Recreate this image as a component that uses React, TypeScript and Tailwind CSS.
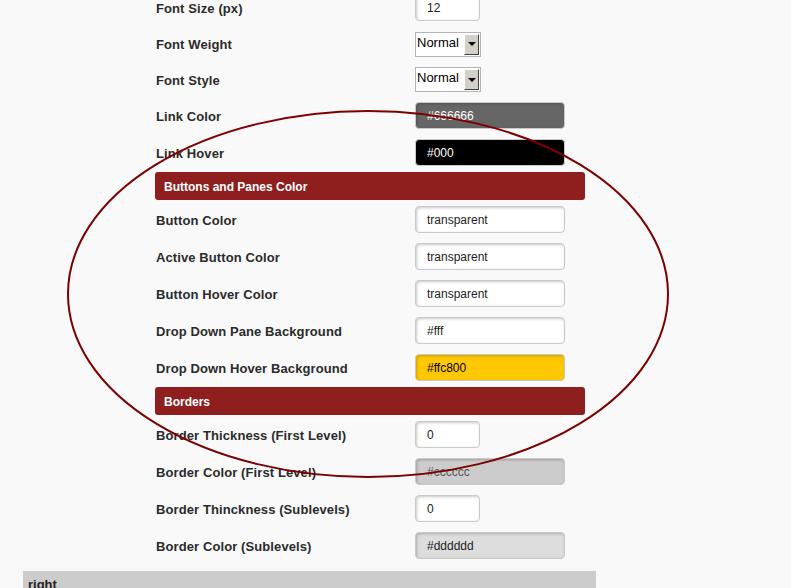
type Field = {
  label: string
  value?: string
  kind: 'text' | 'small' | 'select'
  bg?: string
  h?: string
}

const top: Field[] = [
  { label: 'Font Size (px)', value: '12', kind: 'small', h: 'h-[37px]' },
  { label: 'Font Weight', value: 'Normal', kind: 'select', h: 'h-[36px]' },
  { label: 'Font Style', value: 'Normal', kind: 'select', h: 'h-[35px]' },
  { label: 'Link Color', value: '#666666', kind: 'text', bg: 'bg-[#666666] text-white' },
  { label: 'Link Hover', value: '#000', kind: 'text', bg: 'bg-black text-white' },
]

const panes: Field[] = [
  { label: 'Button Color', value: 'transparent', kind: 'text' },
  { label: 'Active Button Color', value: 'transparent', kind: 'text' },
  { label: 'Button Hover Color', value: 'transparent', kind: 'text' },
  { label: 'Drop Down Pane Background', value: '#fff', kind: 'text' },
  { label: 'Drop Down Hover Background', value: '#ffc800', kind: 'text', bg: 'bg-[#ffc800] text-black' },
]

const borders: Field[] = [
  { label: 'Border Thickness (First Level)', value: '0', kind: 'small' },
  { label: 'Border Color (First Level)', value: '#cccccc', kind: 'text', bg: 'bg-[#cccccc] text-[#555]' },
  { label: 'Border Thinckness (Sublevels)', value: '0', kind: 'small' },
  { label: 'Border Color (Sublevels)', value: '#dddddd', kind: 'text', bg: 'bg-[#dddddd] text-[#222]' },
]

function Control({ field }: { field: Field }) {
  if (field.kind === 'select') {
    return (
      <div className="flex h-[25px] w-[66px] items-stretch border border-[#b5b5b5] bg-white">
        <span className="flex-1 pl-[1px] pt-[1px] text-[13px] leading-[18px] text-black">{field.value}</span>
        <span className="m-[1px] flex w-[15px] items-center justify-center border border-t-white border-l-white border-r-[#404040] border-b-[#404040] bg-[#d4d0c8]">
          <span className="h-0 w-0 border-x-[4px] border-t-[4px] border-x-transparent border-t-black" />
        </span>
      </div>
    )
  }
  const width = field.kind === 'small' ? 'w-[65px]' : 'w-[150px]'
  const color = field.bg ?? 'bg-white text-[#222]'
  return (
    <div
      className={`flex h-[27px] ${width} items-center rounded-[4px] border border-[#c9c9c9] pl-[11px] text-[12px] shadow-[inset_1px_1px_3px_rgba(0,0,0,0.22)] ${color}`}
    >
      {field.value}
    </div>
  )
}

function Row({ field }: { field: Field }) {
  return (
    <div className={`flex items-center ${field.h ?? 'h-[37px]'}`}>
      <div className="w-[260px] pl-[1px] pt-[2px] text-[13px] font-bold tracking-[0.1px] text-[#2b2b2b]">
        {field.label}
      </div>
      <Control field={field} />
    </div>
  )
}

function SectionHeader({ title }: { title: string }) {
  return (
    <div className="my-[1px] flex h-[28px] items-center rounded-[3px] bg-[#8f1f1f] pl-[9px] pt-[1px] text-[12px] font-bold text-white">
      {title}
    </div>
  )
}

export default function App() {
  return (
    <div
      className="relative h-[588px] w-[791px] overflow-hidden bg-[#f9f9f9]"
      style={{ fontFamily: '"Liberation Sans", Arial, sans-serif' }}
    >
      <div className="ml-[155px] mt-[-11px] w-[430px]">
        {top.map((f) => (
          <Row key={f.label} field={f} />
        ))}
        <SectionHeader title="Buttons and Panes Color" />
        {panes.map((f) => (
          <Row key={f.label} field={f} />
        ))}
        <SectionHeader title="Borders" />
        {borders.map((f) => (
          <Row key={f.label} field={f} />
        ))}
      </div>

      <div className="ml-[23px] mt-[7px] h-[30px] w-[573px] bg-[#cccccc] pl-[5px] pt-[4px] text-[13px] font-bold text-[#222]">
        right
      </div>

      {/* Red annotation ellipse drawn over the form */}
      <svg className="pointer-events-none absolute left-0 top-0" width="791" height="588">
        <ellipse cx="368" cy="294" rx="300" ry="183" fill="none" stroke="#7d0000" strokeWidth="2" />
      </svg>
    </div>
  )
}
